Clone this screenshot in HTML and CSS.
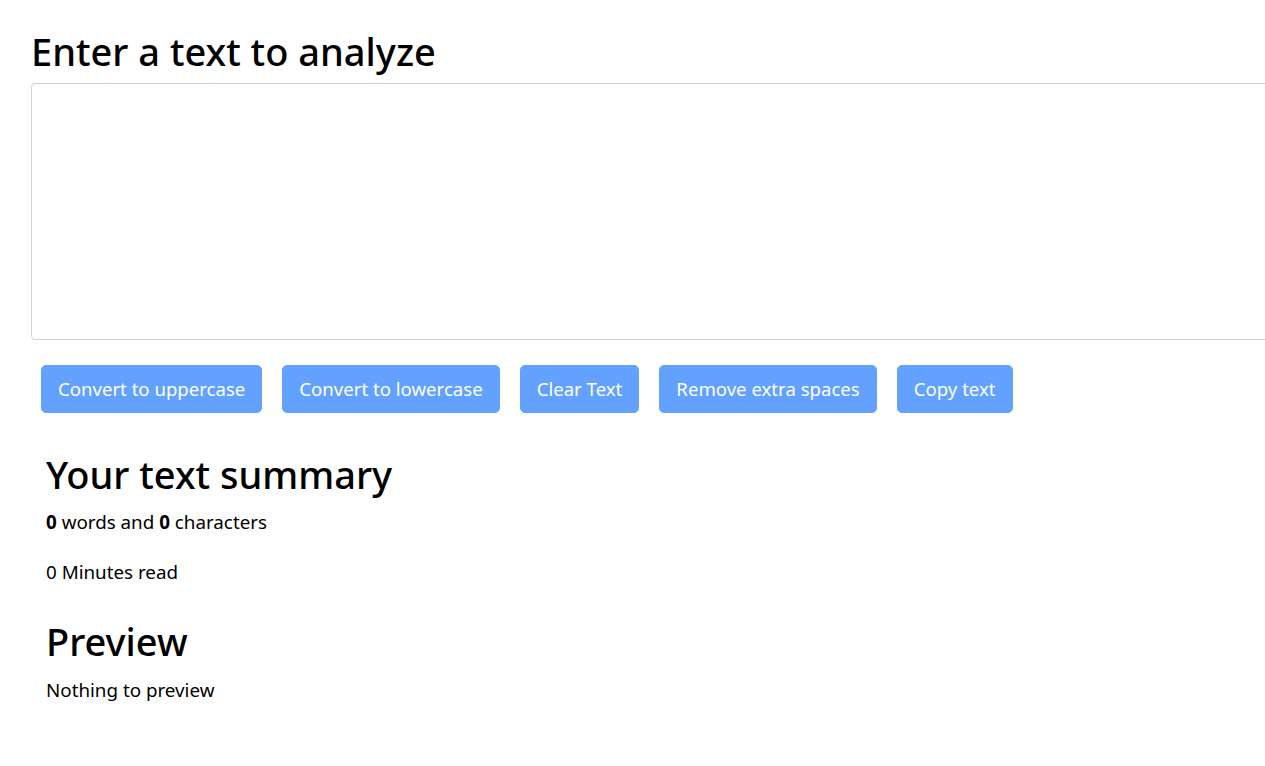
FILE: index.html
```html
<!DOCTYPE html>
<html lang="en">
<head>
<meta charset="utf-8">
<title>TextUtils</title>
<link rel="stylesheet" href="styles.css">
</head>
<body>
<div class="page">
  <h1 class="title">Enter a text to analyze</h1>
  <textarea class="input" rows="8"></textarea>
  <div class="actions">
    <button class="btn" disabled>Convert to uppercase</button>
    <button class="btn" disabled>Convert to lowercase</button>
    <button class="btn" disabled>Clear Text</button>
    <button class="btn" disabled>Remove extra spaces</button>
    <button class="btn" disabled>Copy text</button>
  </div>
  <section class="summary">
    <h2 class="heading">Your text summary</h2>
    <p class="line"><b>0</b> words and <b>0</b> characters</p>
    <p class="line">0 Minutes read</p>
    <h2 class="heading heading-preview">Preview</h2>
    <p class="line">Nothing to preview</p>
  </section>
</div>
</body>
</html>
```

FILE: styles.css
```css
html, body {
  margin: 0;
  padding: 0;
  overflow-x: hidden;
  background: #fff;
}
body {
  font-family: "Noto Sans", "Open Sans", sans-serif;
  font-size: 18.8px;
  line-height: 28px;
  color: #000;
}
.page {
  padding: 27.8px 0 40px 31px;
}
.title {
  margin: 0 0 9.2px 0;
  font-size: 38px;
  line-height: 46px;
  font-weight: 500;
  color: #000;
}
.input {
  display: block;
  box-sizing: border-box;
  width: calc(100% + 20px);
  height: 257px;
  margin: 0;
  padding: 6px 12px;
  border: 1px solid #ced4da;
  border-radius: 4px;
  font: inherit;
  resize: none;
  background: #fff;
}
.actions {
  display: flex;
  gap: 20px;
  margin-top: 25px;
  padding-left: 10px;
}
.btn {
  box-sizing: border-box;
  height: 48px;
  padding: 8px 16px;
  border: 1px solid #62a1fe;
  border-radius: 5px;
  background: #62a1fe;
  color: #fff;
  font-family: inherit;
  font-size: 18.6px;
  line-height: 30px;
  white-space: nowrap;
}
.summary {
  margin-top: 38.3px;
  padding-left: 15px;
}
.heading {
  margin: 0 0 10.4px;
  font-size: 38px;
  line-height: 46px;
  font-weight: 500;
  color: #000;
}
.heading-preview {
  margin: 32px 0 12.4px;
}
.line {
  margin: 0 0 22px;
  color: #000;
}
```
